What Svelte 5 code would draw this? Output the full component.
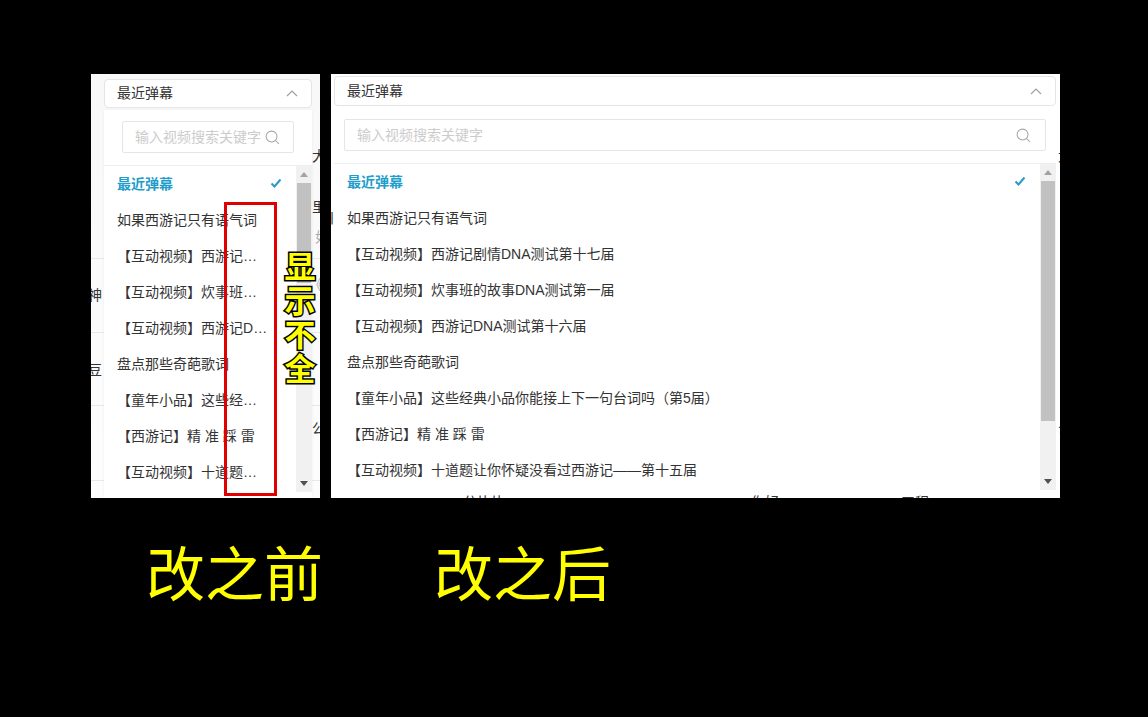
<script>
	const items = [
		'最近弹幕',
		'如果西游记只有语气词',
		'【互动视频】西游记剧情DNA测试第十七届',
		'【互动视频】炊事班的故事DNA测试第一届',
		'【互动视频】西游记DNA测试第十六届',
		'盘点那些奇葩歌词',
		'【童年小品】这些经典小品你能接上下一句台词吗（第5届）',
		'【西游记】精 准 踩 雷',
		'【互动视频】十道题让你怀疑没看过西游记——第十五届'
	];

	// page text peeking out from behind the open dropdown
	const beforeScraps = [
		{ text: '大', x: 221, y: 72, tone: 'dark' },
		{ text: '里', x: 221, y: 123, tone: 'dark' },
		{ text: '如', x: 224, y: 153, tone: 'pale' },
		{ text: '《', x: 218, y: 200, tone: 'pale' },
		{ text: '神', x: -3, y: 211, tone: 'dark' },
		{ text: '豆', x: -3, y: 286, tone: 'dark' },
		{ text: '公', x: 221, y: 344, tone: 'dark' }
	];
	const afterScraps = [
		{ text: '州', x: -11, y: 134, tone: 'dark' },
		{ text: '大', x: 727, y: 72, tone: 'dark' },
		{ text: '公', x: 727, y: 344, tone: 'dark' },
		{ text: '分片片', x: 132, y: 418, tone: 'dark' },
		{ text: '你好', x: 420, y: 418, tone: 'dark' },
		{ text: '工程', x: 570, y: 418, tone: 'dark' }
	];
</script>

{#snippet dropdown()}
	<button class="select" type="button">
		<span>最近弹幕</span>
		<svg width="12" height="7" viewBox="0 0 12 7" fill="none" stroke="#a0a0a0" stroke-width="1.2">
			<path d="M1 6l5-5 5 5" />
		</svg>
	</button>
	<div class="menu">
		<div class="search">
			<input type="text" placeholder="输入视频搜索关键字" />
			<svg width="15" height="15" viewBox="0 0 16 16" fill="none" stroke="#a6a6a6" stroke-width="1.1">
				<circle cx="7" cy="7" r="5.8" />
				<path d="M11.2 11.2l3.6 3.6" />
			</svg>
		</div>
		<div class="list">
			<ul>
				{#each items as item, i}
					<li class:active={i === 0}>
						<span class="label">{item}</span>
						{#if i === 0}
							<svg width="12" height="10" viewBox="0 0 12 10" fill="none" stroke="#2b9bc6" stroke-width="2">
								<path d="M1.5 5.5l3 3 6-7" />
							</svg>
						{/if}
					</li>
				{/each}
			</ul>
			<div class="scrollbar">
				<i class="arrow up"></i>
				<div class="thumb-track"><div class="thumb"></div></div>
				<i class="arrow down"></i>
			</div>
		</div>
	</div>
{/snippet}

<div class="stage">
	<div class="shots">
		<section class="shot before">
			{#each beforeScraps as s}
				<span class="scrap {s.tone}" style="left: {s.x}px; top: {s.y}px">{s.text}</span>
			{/each}
			<hr class="line" style="top: 184px" />
			<hr class="line" style="top: 258px" />
			<hr class="line" style="top: 331px" />
			<hr class="line" style="top: 406px" />
			{@render dropdown()}
		</section>
		<section class="shot after">
			{#each afterScraps as s}
				<span class="scrap {s.tone}" style="left: {s.x}px; top: {s.y}px">{s.text}</span>
			{/each}
			{@render dropdown()}
		</section>
	</div>

	<div class="captions">
		<span>改之前</span>
		<span>改之后</span>
	</div>

	<div class="red-box"></div>
	<div class="note">显示不全</div>
</div>

<style>
	:global(body) {
		background: #000;
	}

	.stage {
		position: relative;
		width: 1148px;
		height: 717px;
		background: #000;
		overflow: hidden;
		font-family: 'Liberation Sans', 'Noto Sans CJK SC', sans-serif;
		font-size: 14px;
		color: #333;
	}

	.shots {
		display: flex;
		gap: 11px;
		padding: 74px 0 0 91px;
	}

	.shot {
		position: relative;
		height: 424px;
		background: #fff;
		overflow: hidden;
		box-sizing: border-box;
	}

	.shot.before {
		width: 229px;
		padding: 5px 8px 0 13px;
		background: linear-gradient(#f8f8f8, #fdfdfd);
	}

	.shot.after {
		width: 729px;
		padding: 2px 4px 0 3px;
	}

	.scrap {
		position: absolute;
		font-size: 14px;
		line-height: 20px;
	}

	.scrap.dark {
		color: #333;
	}

	.scrap.pale {
		color: #aaa;
	}

	.line {
		position: absolute;
		left: 0;
		right: 0;
		margin: 0;
		border: 0;
		border-top: 1px solid #e8e8e8;
	}

	.select {
		position: relative;
		display: flex;
		align-items: center;
		justify-content: space-between;
		width: 100%;
		height: 30px;
		padding: 0 13px 2px 12px;
		box-sizing: border-box;
		background: #fff;
		border: 1px solid #e5e5e5;
		border-radius: 4px;
		font: inherit;
		color: #333;
	}

	.before .select {
		height: 29px;
		padding-bottom: 3px;
	}

	.select svg {
		margin-top: 2px;
	}

	.menu {
		position: relative;
		margin-top: 2px;
		background: #fff;
		box-shadow: 0 0 3px rgba(0, 0, 0, 0.06);
	}

	.after .menu {
		height: 382px;
		box-shadow: none;
	}

	.before .menu {
		height: 388px;
	}

	.search {
		position: relative;
		height: 56px;
		padding: 11px 18px 0;
		box-sizing: border-box;
		border-bottom: 1px solid #eee;
	}

	.after .search {
		padding: 11px 10px 0;
	}

	.search input {
		display: block;
		width: 100%;
		height: 32px;
		padding: 0 12px;
		box-sizing: border-box;
		border: 1px solid #e6e6e6;
		border-radius: 2px;
		outline: none;
		font: inherit;
		background: #fff;
	}

	.search input::placeholder {
		color: #ccc;
		opacity: 1;
	}

	.search svg {
		position: absolute;
		top: 20px;
		right: 32px;
	}

	.after .search svg {
		right: 25px;
	}

	.list {
		display: flex;
		height: 326px;
	}

	ul {
		flex: 1;
		min-width: 0;
		margin: 0;
		padding: 0;
		list-style: none;
	}

	li {
		display: flex;
		align-items: center;
		justify-content: space-between;
		height: 36px;
		padding: 0 14px 2px 13px;
		box-sizing: border-box;
		white-space: nowrap;
	}

	.label {
		overflow: hidden;
		text-overflow: ellipsis;
	}

	.before .label {
		max-width: 152px;
	}

	li.active {
		font-weight: 700;
		color: #1f9dcb;
	}

	.scrollbar {
		display: flex;
		flex-direction: column;
		align-items: center;
		flex: none;
		width: 16px;
		background: #f1f1f1;
	}

	.thumb-track {
		flex: 1;
		align-self: stretch;
		padding: 0 1px;
	}

	.thumb {
		height: 100px;
		background: #c1c1c1;
	}

	.after .thumb {
		height: 240px;
	}

	.arrow {
		flex: none;
		width: 0;
		height: 0;
		border-left: 4px solid transparent;
		border-right: 4px solid transparent;
	}

	.arrow.up {
		margin: 6px 0;
		border-bottom: 5px solid #a3a3a3;
	}

	.arrow.down {
		margin: 6px 0;
		border-top: 5px solid #505050;
	}

	.captions {
		display: flex;
		gap: 111px;
		padding: 40px 0 0 146px;
		font-family: 'Noto Sans CJK SC', sans-serif;
		font-size: 59px;
		line-height: 66px;
		color: #ff0;
	}

	.red-box {
		position: absolute;
		left: 224px;
		top: 202px;
		width: 47px;
		height: 288px;
		border: 3px solid #e00000;
	}

	.note {
		position: absolute;
		left: 283px;
		top: 248px;
		width: 34px;
		font-family: 'Noto Sans CJK SC', sans-serif;
		font-size: 31px;
		font-weight: 700;
		line-height: 34px;
		text-align: center;
		color: #ff0;
		-webkit-text-stroke: 3px #000;
		paint-order: stroke fill;
	}
</style>
